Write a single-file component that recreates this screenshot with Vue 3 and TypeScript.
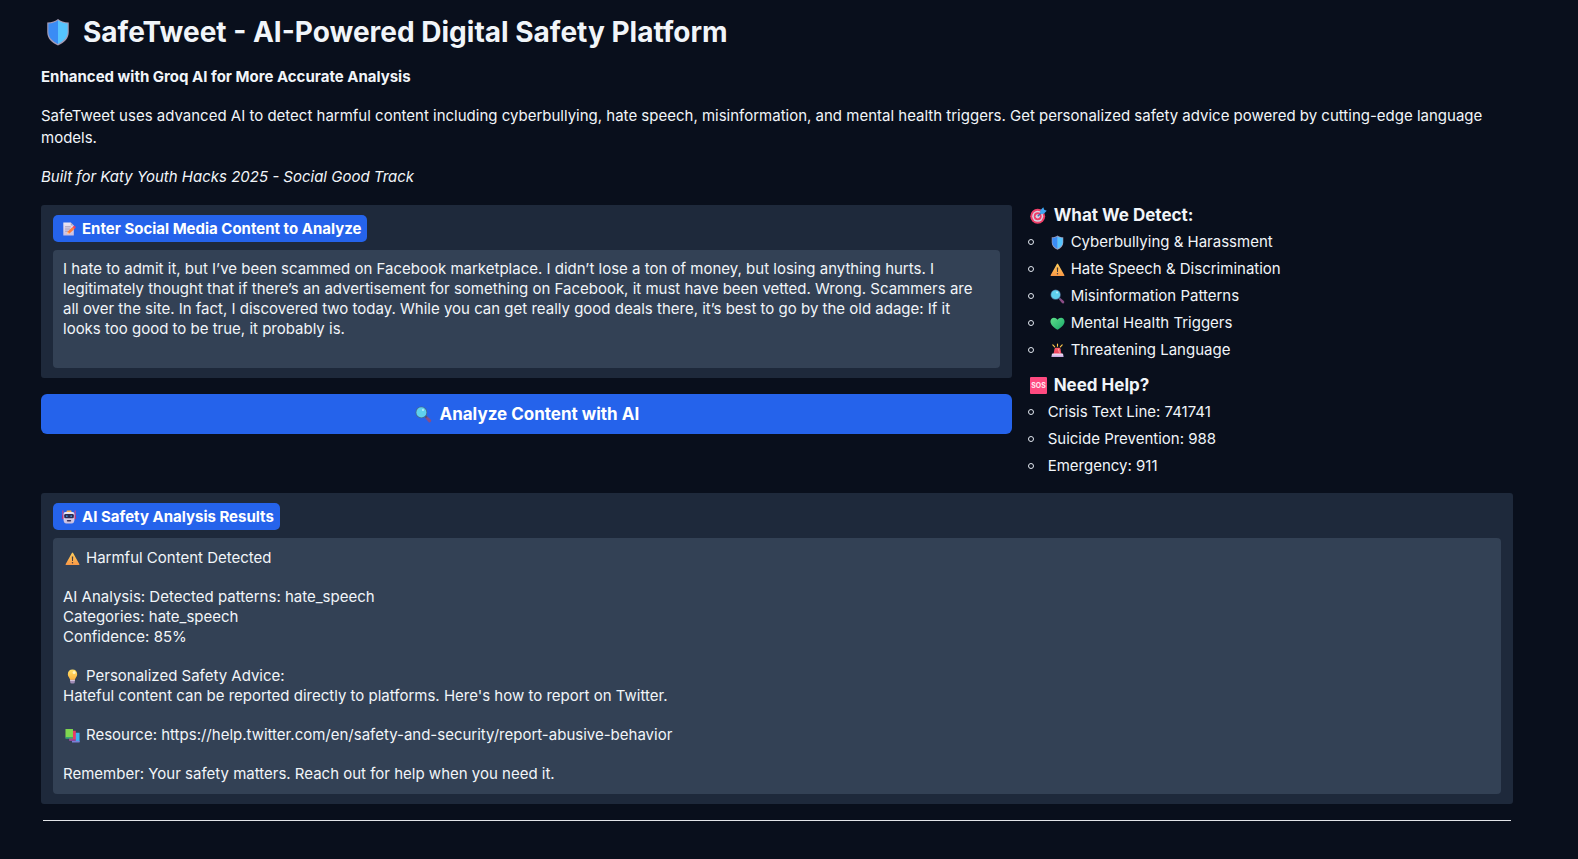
<script setup lang="ts">
import { ref } from 'vue'

interface Line {
  icon?: string
  text: string
}

const content = ref(
  'I hate to admit it, but I’ve been scammed on Facebook marketplace. I didn’t lose a ton of money, but losing anything hurts. I legitimately thought that if there’s an advertisement for something on Facebook, it must have been vetted. Wrong. Scammers are all over the site. In fact, I discovered two today. While you can get really good deals there, it’s best to go by the old adage: If it looks too good to be true, it probably is.'
)

const detections: Line[] = [
  { icon: 'shield', text: 'Cyberbullying & Harassment' },
  { icon: 'warning', text: 'Hate Speech & Discrimination' },
  { icon: 'lens', text: 'Misinformation Patterns' },
  { icon: 'heart', text: 'Mental Health Triggers' },
  { icon: 'siren', text: 'Threatening Language' },
]

const helplines: Line[] = [
  { text: 'Crisis Text Line: 741741' },
  { text: 'Suicide Prevention: 988' },
  { text: 'Emergency: 911' },
]

const results: Line[][] = [
  [{ icon: 'warning', text: 'Harmful Content Detected' }],
  [
    { text: 'AI Analysis: Detected patterns: hate_speech' },
    { text: 'Categories: hate_speech' },
    { text: 'Confidence: 85%' },
  ],
  [
    { icon: 'bulb', text: 'Personalized Safety Advice:' },
    { text: "Hateful content can be reported directly to platforms. Here's how to report on Twitter." },
  ],
  [{ icon: 'books', text: 'Resource: https://help.twitter.com/en/safety-and-security/report-abusive-behavior' }],
  [{ text: 'Remember: Your safety matters. Reach out for help when you need it.' }],
]
</script>

<template>
  <svg class="sprite" aria-hidden="true">
    <defs>
      <linearGradient id="g-amber" x1="0" y1="0" x2="0" y2="1">
        <stop offset="0" stop-color="#ffcf5c" /><stop offset="1" stop-color="#f99746" />
      </linearGradient>
      <linearGradient id="g-bulb" x1="0" y1="0" x2="0" y2="1">
        <stop offset="0" stop-color="#ffe169" /><stop offset="1" stop-color="#fbb03f" />
      </linearGradient>
      <linearGradient id="g-heart" x1="0" y1="0" x2="1" y2="1">
        <stop offset="0" stop-color="#5fe08a" /><stop offset="1" stop-color="#17a86a" />
      </linearGradient>
      <linearGradient id="g-siren" x1="0" y1="0" x2="0" y2="1">
        <stop offset="0" stop-color="#ff5b62" /><stop offset="1" stop-color="#e83a5c" />
      </linearGradient>
      <linearGradient id="g-base" x1="0" y1="0" x2="0" y2="1">
        <stop offset="0" stop-color="#f3e6f7" /><stop offset="1" stop-color="#c3a3dd" />
      </linearGradient>
      <linearGradient id="g-paper" x1="0" y1="0" x2="0" y2="1">
        <stop offset="0" stop-color="#ece6f2" /><stop offset="1" stop-color="#c9bde0" />
      </linearGradient>
    </defs>
    <symbol id="i-shield" viewBox="0 0 32 32">
      <path d="M16 1c3 2.400 7 3.700 12.300 4v11c0 7-4.500 12-12.300 15.500C8.200 28 3.700 23 3.700 16V5C9 4.700 13 3.400 16 1z" fill="#a59bb5" />
      <path d="M16 2.600v27C9 26 5 21.800 5 16V6.300C10 6 13.300 4.700 16 2.600z" fill="#3a8cf5" />
      <path d="M16 2.600v27C23 26 27 21.800 27 16V6.300C22 6 18.700 4.700 16 2.600z" fill="#55c4ff" />
    </symbol>
    <symbol id="i-warning" viewBox="0 0 32 32">
      <path d="M14.700 4.200a1.500 1.500 0 0 1 2.600 0L30.500 27.500a1.600 1.600 0 0 1-1.400 2.500H2.900a1.600 1.600 0 0 1-1.400-2.500z" fill="url(#g-amber)" />
      <path d="M14.500 11.500h3l-.5 10h-2z" fill="#433b3f" />
      <circle cx="16" cy="25" r="1.600" fill="#433b3f" />
    </symbol>
    <symbol id="i-lens" viewBox="0 0 32 32">
      <path d="M18.500 21.500l3-3 8 7a3 3 0 0 1-4 4.500z" fill="#8b4d86" />
      <path d="M17 19l2.500-2.500 4 3.500-3 3z" fill="#4b5578" />
      <circle cx="12" cy="12" r="11" fill="#46678c" />
      <circle cx="12" cy="12" r="9.500" fill="#5fd0ee" />
      <circle cx="15" cy="7.500" r="2" fill="#b6f1ff" />
    </symbol>
    <symbol id="i-heart" viewBox="0 0 32 32">
      <path d="M16 29.500C8 24 1 18.500 1 11.500 1 7 4.400 3.800 8.500 3.800c3.200 0 5.800 1.500 7.500 4.200 1.700-2.700 4.300-4.200 7.500-4.200 4.100 0 7.500 3.200 7.500 7.700 0 7-7 12.500-15 18z" fill="url(#g-heart)" />
    </symbol>
    <symbol id="i-siren" viewBox="0 0 32 32">
      <path d="M16 2v5M6 4l4 4.500M26 4l-4 4.500" stroke="#ffc94d" stroke-width="2.400" stroke-linecap="round" />
      <path d="M7.500 23.500l2.200-11A3.500 3.500 0 0 1 13 10h6a3.500 3.500 0 0 1 3.300 2.500l2.200 11z" fill="url(#g-siren)" />
      <path d="M18 13l2 7" stroke="#ffa2a6" stroke-width="2" stroke-linecap="round" />
      <path d="M6 22.500h20a2 2 0 0 1 2 1.700l1 5.800H3l1-5.800a2 2 0 0 1 2-1.700z" fill="url(#g-base)" />
    </symbol>
    <symbol id="i-target" viewBox="0 0 32 32">
      <circle cx="14.500" cy="17.500" r="14" fill="#ef3f68" />
      <circle cx="14.500" cy="17.500" r="10.300" fill="#d8d3e4" />
      <circle cx="14.500" cy="17.500" r="7.400" fill="#ef3f68" />
      <circle cx="14.500" cy="17.500" r="4" fill="#d8d3e4" />
      <path d="M14.500 17.500L24 8.500" stroke="#3f6fb8" stroke-width="2.400" />
      <path d="M19 11l.5-5L25 .5l1.800 4.700 4.700 1.800-5.500 5.500-5.500.5z" fill="#3fa6f2" />
    </symbol>
    <symbol id="i-memo" viewBox="0 0 32 32">
      <path d="M3 1h17l7 7v23H3z" fill="url(#g-paper)" />
      <path d="M20 1l7 7h-7z" fill="#a99fc4" />
      <path d="M7 11h13M7 16h11M7 21h7" stroke="#9b92b3" stroke-width="2" />
      <path d="M11 28l1.500-6L24 11.500l4.500 4.500L17 26.500z" fill="#ff7d3c" />
      <path d="M24 11.500l2-1.800a2.500 2.500 0 0 1 3.800.2 2.800 2.800 0 0 1 .7 4.100l-2 2z" fill="#ee3f62" />
      <path d="M11 28l1.500-6 4.500 4.500z" fill="#ffd0a0" />
    </symbol>
    <symbol id="i-robot" viewBox="0 0 32 32">
      <path d="M2 2v17M30 2v17" stroke="#e0447c" stroke-width="2.400" stroke-linecap="round" />
      <path d="M11 1h10l1.500 5h-13z" fill="#fdb44b" />
      <rect x="0" y="12" width="4" height="9" rx="1" fill="#b83578" />
      <rect x="28" y="12" width="4" height="9" rx="1" fill="#b83578" />
      <path d="M8 4.500h16a4.500 4.500 0 0 1 4.500 4.500v12c0 6-2 10-7 10h-11c-5 0-7-4-7-10V9A4.500 4.500 0 0 1 8 4.500z" fill="url(#g-paper)" />
      <rect x="5" y="9" width="22" height="10" rx="3" fill="#2b2b52" />
      <circle cx="11" cy="14" r="2" fill="#3f8fd0" />
      <circle cx="21" cy="14" r="2" fill="#3f8fd0" />
      <rect x="11" y="23" width="10" height="3.500" rx="1.700" fill="#3a3159" />
    </symbol>
    <symbol id="i-bulb" viewBox="0 0 32 32">
      <path d="M16 1c6 0 10 4.300 10 10 0 5.500-4.500 7.500-5.200 13h-9.600C10.500 18.500 6 16.500 6 11 6 5.300 10 1 16 1z" fill="url(#g-bulb)" />
      <circle cx="19.500" cy="7.500" r="3.200" fill="#fff5c4" />
      <path d="M11 23h10v4.500a3.500 3.500 0 0 1-3.500 3.500h-3a3.500 3.500 0 0 1-3.500-3.500z" fill="#a08bb4" />
      <path d="M11 24.500h10" stroke="#d9cbe4" stroke-width="2" />
    </symbol>
    <symbol id="i-books" viewBox="0 0 32 32">
      <path d="M15 10h16v20H15z" fill="#39b2f2" />
      <path d="M15 27h16v4H15z" fill="#7b7fd6" />
      <path d="M9 6h14v20H9z" fill="#e93a66" />
      <path d="M9 24h14v3.500H9z" fill="#8b4b9c" />
      <path d="M1 2h16v18H1z" fill="#7fd650" />
      <path d="M1 19h16v4H1z" fill="#39a276" />
    </symbol>
  </svg>

  <main class="page">
    <h1>
      <svg class="icon icon-xl" aria-hidden="true"><use href="#i-shield" /></svg>
      SafeTweet - AI-Powered Digital Safety Platform
    </h1>
    <p><strong>Enhanced with Groq AI for More Accurate Analysis</strong></p>
    <p>
      SafeTweet uses advanced AI to detect harmful content including cyberbullying, hate speech,
      misinformation, and mental health triggers. Get personalized safety advice powered by
      cutting-edge language models.
    </p>
    <p><em>Built for Katy Youth Hacks 2025 - Social Good Track</em></p>

    <div class="columns">
      <form class="entry" @submit.prevent>
        <div class="panel">
          <label class="tag" for="content">
            <svg class="icon icon-sm" aria-hidden="true"><use href="#i-memo" /></svg>
            Enter Social Media Content to Analyze
          </label>
          <textarea id="content" v-model="content" class="field" rows="5" spellcheck="false"></textarea>
        </div>
        <button type="submit" class="analyze">
          <svg class="icon icon-lg" aria-hidden="true"><use href="#i-lens" /></svg>
          Analyze Content with AI
        </button>
      </form>

      <aside class="info">
        <section>
          <h2><svg class="icon icon-lg" aria-hidden="true"><use href="#i-target" /></svg>What We Detect:</h2>
          <ul>
            <li v-for="item in detections" :key="item.text">
              <svg class="icon icon-md" aria-hidden="true"><use :href="'#i-' + item.icon" /></svg>{{ item.text }}
            </li>
          </ul>
        </section>
        <section>
          <h2>
            <svg class="icon icon-lg" viewBox="0 0 32 32" aria-hidden="true">
              <rect width="32" height="32" rx="2" fill="#ff4a80" />
              <text class="sos" x="16" y="21" text-anchor="middle">SOS</text>
            </svg>
            Need Help?
          </h2>
          <ul>
            <li v-for="item in helplines" :key="item.text">{{ item.text }}</li>
          </ul>
        </section>
      </aside>
    </div>

    <section class="panel">
      <label class="tag" for="results">
        <svg class="icon icon-sm" aria-hidden="true"><use href="#i-robot" /></svg>
        AI Safety Analysis Results
      </label>
      <output id="results" class="field results">
        <span v-for="(group, g) in results" :key="g" class="group">
          <span v-for="line in group" :key="line.text" class="line">
            <svg v-if="line.icon" class="icon icon-md" aria-hidden="true"><use :href="'#i-' + line.icon" /></svg>{{ line.text }}
          </span>
        </span>
      </output>
    </section>

    <hr />
  </main>
</template>

<style>
body {
  margin: 0;
  background: #090f1c;
}
</style>

<style scoped>
.sprite {
  position: absolute;
  width: 0;
  height: 0;
}

.page {
  padding: 15px 65px 38px 41px;
  color: #f1f5f9;
  font: 15px/22px Inter, "Noto Sans", sans-serif;
}

h1,
h2,
p,
ul {
  margin: 0;
  padding: 0;
}

h1 {
  display: flex;
  align-items: center;
  margin-bottom: 17px;
  font-size: 28px;
  line-height: 34px;
  font-weight: 700;
}

p {
  margin-bottom: 17px;
}

strong {
  font-weight: 700;
}

.icon {
  flex: none;
}

.icon-xl {
  width: 28px;
  height: 28px;
  margin: 0 11px 0 3px;
}

.icon-lg {
  width: 17px;
  height: 17px;
  margin: 0 7px 0 2px;
}

.icon-md {
  width: 15px;
  height: 15px;
  margin: 0 6px 0 2px;
}

.icon-sm {
  width: 14px;
  height: 14px;
  margin: 0 6px 0 2px;
}

.sos {
  fill: #ffe9f1;
  font-size: 13px;
  font-weight: 700;
}

.columns {
  display: grid;
  grid-template-columns: 2fr 1fr;
  gap: 16px;
  margin-bottom: 16px;
}

.entry {
  display: flex;
  flex-direction: column;
  gap: 16px;
  min-width: 0;
}

.panel {
  display: flex;
  flex-direction: column;
  align-items: flex-start;
  gap: 8px;
  padding: 10px 12px;
  border-radius: 3px;
  background: #1e293b;
}

.tag {
  display: flex;
  align-items: center;
  padding: 0 6px 0 7px;
  border-radius: 5px;
  background: #2563eb;
  color: #fff;
  line-height: 27px;
  font-weight: 700;
}

.field {
  display: block;
  box-sizing: border-box;
  width: 100%;
  margin: 0;
  padding: 9px 10px;
  border: 0;
  border-radius: 4px;
  outline: none;
  background: #334155;
  color: #f1f5f9;
  font: inherit;
  line-height: 20px;
  resize: none;
  overflow: hidden;
}

.results {
  display: flex;
  flex-direction: column;
  gap: 19px;
  padding: 10px;
}

.group {
  display: flex;
  flex-direction: column;
}

.line {
  display: flex;
  align-items: center;
}

.analyze {
  display: flex;
  align-items: center;
  justify-content: center;
  padding: 9px 16px;
  border: 0;
  border-radius: 6px;
  background: #2563eb;
  color: #fff;
  font: inherit;
  font-size: 17px;
  font-weight: 700;
  cursor: pointer;
}

.info {
  display: flex;
  flex-direction: column;
  gap: 14px;
}

h2 {
  display: flex;
  align-items: center;
  margin-bottom: 6px;
  font-size: 17px;
  line-height: 20px;
  font-weight: 700;
}

ul {
  display: flex;
  flex-direction: column;
  gap: 5px;
  list-style: none;
}

li {
  display: flex;
  align-items: center;
}

li::before {
  content: "";
  box-sizing: border-box;
  width: 6px;
  height: 6px;
  margin-right: 14px;
  border: 1px solid #e2e8f0;
  border-radius: 50%;
}

hr {
  height: 1px;
  margin: 16px 2px 0;
  border: 0;
  background: #e2e4e8;
}
</style>
